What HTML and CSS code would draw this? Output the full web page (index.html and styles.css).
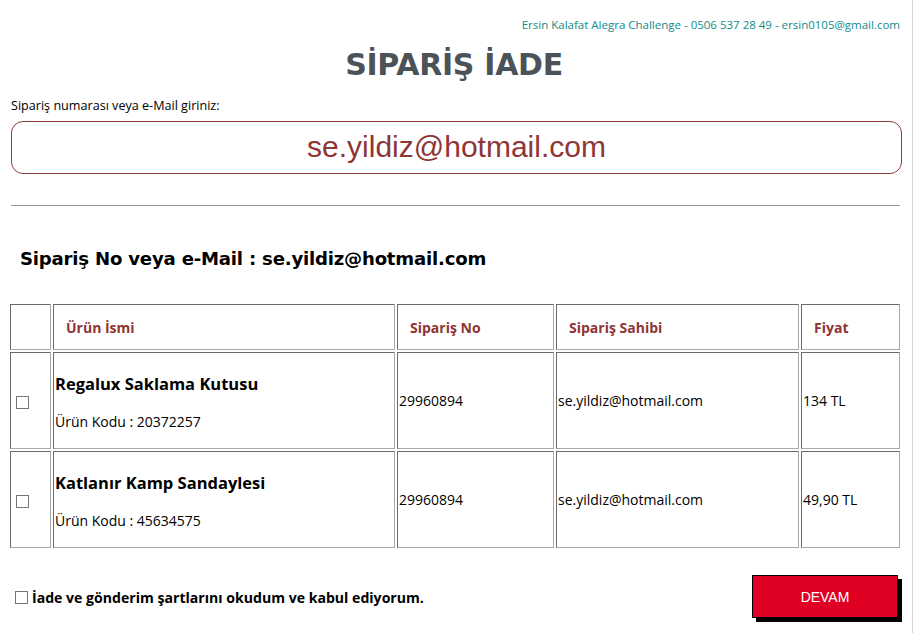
FILE: index.html
```html
<!DOCTYPE html>
<html lang="tr">
<head>
<meta charset="utf-8">
<title>Sipariş İade</title>
<link rel="stylesheet" href="styles.css">
</head>
<body>
<div class="page">
  <div class="credit">Ersin Kalafat Alegra Challenge - 0506 537 28 49 - ersin0105@gmail.com</div>
  <h1 class="title">SİPARİŞ İADE</h1>
  <label class="label" for="q">Sipariş numarası veya e-Mail giriniz:</label>
  <input class="search" id="q" type="text" value="se.yildiz@hotmail.com">
  <hr class="rule">
  <h2 class="result">Sipariş No veya e-Mail : se.yildiz@hotmail.com</h2>
  <table class="orders">
    <colgroup>
      <col class="c1"><col class="c2"><col class="c3"><col class="c4"><col class="c5">
    </colgroup>
    <thead>
      <tr>
        <th></th>
        <th>Ürün İsmi</th>
        <th>Sipariş No</th>
        <th>Sipariş Sahibi</th>
        <th>Fiyat</th>
      </tr>
    </thead>
    <tbody>
      <tr>
        <td class="chk"><span class="box"></span></td>
        <td><div class="pname">Regalux Saklama Kutusu</div><div class="pcode">Ürün Kodu : 20372257</div></td>
        <td>29960894</td>
        <td>se.yildiz@hotmail.com</td>
        <td>134 TL</td>
      </tr>
      <tr>
        <td class="chk"><span class="box"></span></td>
        <td><div class="pname">Katlanır Kamp Sandaylesi</div><div class="pcode">Ürün Kodu : 45634575</div></td>
        <td>29960894</td>
        <td>se.yildiz@hotmail.com</td>
        <td>49,90 TL</td>
      </tr>
    </tbody>
  </table>
  <div class="footer">
    <label class="agree"><span class="box"></span>İade ve gönderim şartlarını okudum ve kabul ediyorum.</label>
    <button class="go" type="button">DEVAM</button>
  </div>
</div>
</body>
</html>
```
FILE: styles.css
```css
html, body {
  margin: 0;
  padding: 0;
  background: #fff;
}
body {
  font-family: "Open Sans", "Noto Sans", sans-serif;
  color: #000;
}
.page {
  width: 913px;
  height: 633px;
  box-sizing: border-box;
  border-right: 1px solid #d4d4d4;
  padding: 0 12px 0 8px;
  overflow: hidden;
}
.credit {
  text-align: right;
  color: #0f8c8c;
  font-size: 11.5px;
  padding-top: 17px;
  line-height: 16px;
  padding-right: 0;
}
.title {
  margin: 14px 0 0;
  text-align: center;
  font-family: "DejaVu Sans", sans-serif;
  font-weight: bold;
  font-size: 30px;
  line-height: 36px;
  color: #4b5258;
  letter-spacing: -0.3px;
}
.label {
  display: block;
  margin: 14px 0 0 3px;
  font-size: 12.6px;
  line-height: 18px;
}
.search {
  display: block;
  box-sizing: border-box;
  width: 891px;
  height: 53px;
  margin: 6px 0 0 3px;
  border: 1px solid #8e3a3a;
  border-radius: 12px;
  text-align: center;
  font-family: "Liberation Sans", Arial, sans-serif;
  font-size: 30px;
  color: #8e3535;
  padding: 0 0 2px;
  outline: none;
  background: #fff;
}
.rule {
  margin: 31px 0 0 3px;
  width: 889px;
  border: 0;
  border-top: 1px solid #9a9a9a;
  height: 0;
}
.result {
  margin: 40px 0 0 12px;
  font-family: "DejaVu Sans", sans-serif;
  font-weight: bold;
  font-size: 18.1px;
  line-height: 26px;
  letter-spacing: -0.2px;
}
.orders {
  margin-top: 30px;
  width: 894px;
  border-collapse: separate;
  border-spacing: 2px;
  table-layout: fixed;
}
.c1 { width: 41px; }
.c2 { width: 342px; }
.c3 { width: 157px; }
.c4 { width: 243px; }
.c5 { width: 99px; }
.orders th, .orders td {
  border: 1px solid;
  border-color: #6a6a6a #a8a8a8 #a8a8a8 #6a6a6a;
  text-align: left;
  vertical-align: middle;
  font-size: 14px;
}
.orders th {
  height: 44px;
  padding: 0 0 0 12px;
  color: #8e3535;
  font-weight: bold;
}
.orders td {
  height: 95px;
  padding: 0 0 0 1px;
}
.orders td.chk {
  padding-left: 5px;
}
.box {
  display: inline-block;
  width: 11px;
  height: 11px;
  border: 1px solid #767676;
  background: #fff;
  vertical-align: middle;
}
.pname {
  font-weight: bold;
  font-size: 16.5px;
  line-height: 22px;
  margin-top: 2px;
}
.pcode {
  font-size: 14px;
  line-height: 18px;
  margin-top: 18px;
}
.footer {
  display: flex;
  align-items: center;
  justify-content: space-between;
  margin-top: 25px;
  padding-left: 7px;
}
.agree {
  display: flex;
  align-items: center;
  gap: 4px;
  font-weight: bold;
  font-size: 14.1px;
  margin-top: 1px;
}
.go {
  width: 146px;
  height: 43px;
  margin-right: 2px;
  background: #e00024;
  color: #fff;
  border: 1px solid #000;
  box-shadow: 4px 4px 0 #000;
  font-family: "Liberation Sans", Arial, sans-serif;
  font-size: 14px;
  padding: 0;
}
```
